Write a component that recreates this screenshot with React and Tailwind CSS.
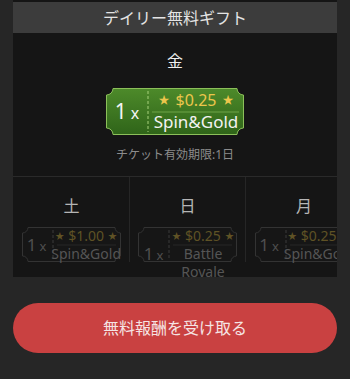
import React from "react";

const font = { fontFamily: '"Noto Sans", "Noto Sans CJK JP", sans-serif' };

function TicketShape({ w, h, r, fill, stroke, dashX, lineY, lineColor, dashColor, gradId }) {
  const d = `M${r},0.5 H${w - r} A${r - 0.5},${r - 0.5} 0 0 0 ${w - 0.5},${r} V${h - r} A${r - 0.5},${r - 0.5} 0 0 0 ${w - r},${h - 0.5} H${r} A${r - 0.5},${r - 0.5} 0 0 0 0.5,${h - r} V${r} A${r - 0.5},${r - 0.5} 0 0 0 ${r},0.5 Z`;
  return (
    <svg className="absolute left-0 top-0" width={w} height={h} viewBox={`0 0 ${w} ${h}`}>
      {gradId && (
        <defs>
          <linearGradient id={gradId} x1="0" y1="0" x2="0" y2="1">
            <stop offset="0" stopColor="#4d8a2a" />
            <stop offset="1" stopColor="#2f6419" />
          </linearGradient>
        </defs>
      )}
      <path d={d} fill={gradId ? `url(#${gradId})` : fill} stroke={stroke} strokeWidth="1" />
      <line x1={dashX} y1="3" x2={dashX} y2={h - 3} stroke={dashColor} strokeWidth="1" strokeDasharray="3 2" />
      <line x1={dashX + 4} y1={lineY} x2={w - 5} y2={lineY} stroke={lineColor} strokeWidth="1" />
    </svg>
  );
}

function SmallTicket({ price, name }) {
  return (
    <div className="relative w-[99px] h-[35px] flex items-start">
      <TicketShape w={99} h={35} r={6} fill="#161616" stroke="#333333" dashX={31} lineY={18} lineColor="#262626" dashColor="#3a3a3a" />
      <div className="relative flex items-center w-full">
        <div className="w-[31px] flex items-baseline justify-center text-[#4f4f4f]">
          <span className="text-[17px]">1</span>
          <span className="text-[13px] ml-[3px]">x</span>
        </div>
        <div className="flex-1 flex flex-col items-center">
          <div className="h-[18px] flex items-center gap-[4px] text-[#5f5225]">
            <span className="text-[9px]">★</span>
            <span className="text-[14px] leading-[18px]">{price}</span>
            <span className="text-[9px]">★</span>
          </div>
          <div className="text-[14px] leading-[18px] text-[#555555] text-center whitespace-pre-line">{name}</div>
        </div>
      </div>
    </div>
  );
}

function Day({ label, price, name, last }) {
  return (
    <div className={`shrink-0 w-[116px] flex flex-col items-center ${last ? "" : "border-r border-[#262626]"}`}>
      <div className="h-[50px] pt-[18px] text-[16px] leading-[22px] text-[#b5b5b5]">{label}</div>
      <SmallTicket price={price} name={name} />
    </div>
  );
}

export default function App() {
  return (
    <div className="w-[350px] h-[379px] bg-[#262626] px-[13px] overflow-hidden" style={font}>
      <div className="bg-[#151515] pt-[2px] h-[277px] overflow-hidden">
        <div className="h-[31px] bg-[#3c3c3c] flex items-center justify-center text-[16px] text-[#e4e4e4]">
          デイリー無料ギフト
        </div>
        <div className="h-[144px] border-b border-[#2a2a2a] flex flex-col items-center">
          <div className="mt-[17px] text-[16px] leading-[22px] text-[#f0f0f0]">金</div>
          <div className="mt-[16px] relative w-[138px] h-[47px] flex">
            <TicketShape w={138} h={47} r={7} stroke="#8cbf5a" dashX={42} lineY={24} lineColor="#6fa448" dashColor="#a6d07a" gradId="g1" />
            <div className="relative w-[42px] flex items-baseline justify-center pt-[10px] text-[#f4f4f4]">
              <span className="text-[21px] leading-[26px]">1</span>
              <span className="text-[16px] ml-[4px]">x</span>
            </div>
            <div className="relative flex-1 flex flex-col items-center">
              <div className="h-[24px] flex items-center gap-[6px] text-[#ecc64c]">
                <span className="text-[11px]">★</span>
                <span className="text-[16px] leading-[20px]">$0.25</span>
                <span className="text-[11px]">★</span>
              </div>
              <div className="text-[17px] leading-[21px] text-[#f2f2f2] -mt-[1px]">Spin&amp;Gold</div>
            </div>
          </div>
          <div className="mt-[12px] text-[12px] leading-[16px] text-[#8c8c8c]">チケット有効期限:1日</div>
        </div>
        <div className="flex">
          <div className="shrink-0 w-[1px]" />
          <Day label="土" price="$1.00" name="Spin&Gold" />
          <Day label="日" price="$0.25" name={"Battle\nRoyale"} />
          <Day label="月" price="$0.25" name="Spin&Gold" last />
        </div>
      </div>
      <button className="mt-[26px] w-full h-[50px] rounded-full bg-[#c94141] text-[16px] text-[#f5e4e4]">
        無料報酬を受け取る
      </button>
    </div>
  );
}
